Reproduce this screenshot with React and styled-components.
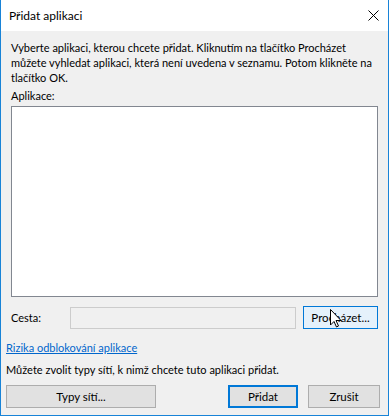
import styled, { createGlobalStyle } from 'styled-components';

const Global = createGlobalStyle`
  html, body {
    margin: 0;
    padding: 0;
    background: #f0f0f0;
  }
  * {
    box-sizing: border-box;
  }
`;

// okno
const Window = styled.div`
  position: relative;
  width: 389px;
  height: 416px;
  display: flex;
  flex-direction: column;
  background: #f0f0f0;
  border: 1px solid #1883d7;
  border-top: none;
  font-family: Lato, 'Noto Sans', sans-serif;
  font-size: 11px;
  color: #000;
  overflow: hidden;
`;

const TitleBar = styled.div`
  height: 31px;
  flex: none;
  display: flex;
  align-items: center;
  justify-content: space-between;
  background: #fff;
  padding: 0 9px 0 8px;
  font-size: 12px;
`;

const Close = styled.svg`
  width: 11px;
  height: 11px;
`;

const Body = styled.div`
  flex: 1;
  display: flex;
  flex-direction: column;
  padding: 9px 10px 0 10px;
`;

const Text = styled.p`
  margin: 0;
  line-height: 15px;
  white-space: nowrap;
`;

const Label = styled.div`
  margin-top: 3px;
  line-height: 15px;
`;

const List = styled.div`
  margin-top: 3px;
  height: 191px;
  flex: none;
  background: #fff;
  border: 1px solid #828790;
`;

const PathRow = styled.div`
  display: flex;
  align-items: center;
  margin-top: 9px;
`;

const PathLabel = styled.span`
  width: 59px;
`;

const PathInput = styled.div`
  width: 227px;
  height: 22px;
  background: #f0f0f0;
  border: 1px solid #cccccc;
`;

const Button = styled.button`
  font-family: inherit;
  font-size: 11.5px;
  height: 23px;
  flex: none;
  width: ${(p) => p.width}px;
  margin-left: ${(p) => p.offset || 0}px;
  padding: 0;
  background: ${(p) => (p.hover ? '#e5f1fb' : '#e1e1e1')};
  border: ${(p) => (p.primary ? '2px solid #0078d7' : p.hover ? '1px solid #0078d7' : '1px solid #adadad')};
  color: #000;
`;

const Footer = styled.div`
  display: flex;
  flex-direction: column;
  margin: 0 -5px;
`;

const Link = styled.a`
  margin-top: 11px;
  color: #0066cc;
  text-decoration: underline;
  line-height: 15px;
  align-self: flex-start;
`;

const Note = styled.div`
  margin-top: 7px;
  line-height: 15px;
`;

const Buttons = styled.div`
  display: flex;
  align-items: center;
  margin-top: 8px;
`;

const Cursor = styled.svg`
  position: absolute;
  left: 329px;
  top: 309px;
`;

const App = () => {
  return (
    <>
      <Global />
      <Window>
        <TitleBar>
          <span>Přidat aplikaci</span>
          <Close viewBox="0 0 11 11">
            <path d="M0.5 0.5 L10.5 10.5 M10.5 0.5 L0.5 10.5" stroke="#000" strokeWidth="1" fill="none" />
          </Close>
        </TitleBar>
        <Body>
          <Text>
            Vyberte aplikaci, kterou chcete přidat. Kliknutím na tlačítko Procházet
            <br />
            můžete vyhledat aplikaci, která není uvedena v seznamu. Potom klikněte na
            <br />
            tlačítko OK.
          </Text>
          <Label>Aplikace:</Label>
          <List />
          <PathRow>
            <PathLabel>Cesta:</PathLabel>
            <PathInput />
            <Button width={75} offset={7} hover>Procházet...</Button>
          </PathRow>
          <Footer>
            <Link href="#">Rizika odblokování aplikace</Link>
            <Note>Můžete zvolit typy sítí, k nimž chcete tuto aplikaci přidat.</Note>
            <Buttons>
              <Button width={150}>Typy sítí...</Button>
              <Button width={70} offset={72} primary>Přidat</Button>
              <Button width={72} offset={10}>Zrušit</Button>
            </Buttons>
          </Footer>
        </Body>
        <Cursor width="12" height="19" viewBox="0 0 12 19">
          <path d="M0.5 0.5 L0.5 16 L4 12.5 L6.5 18 L8.5 17 L6 11.5 L11 11.5 Z" fill="#fff" stroke="#000" strokeWidth="1" />
        </Cursor>
      </Window>
    </>
  );
};

export default App;
